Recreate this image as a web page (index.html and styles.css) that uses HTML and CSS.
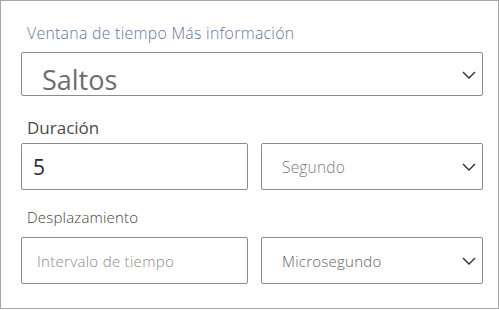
FILE: index.html
```
<!DOCTYPE html>
<html lang="es">
<head>
    <meta charset="UTF-8">
    <meta name="viewport" content="width=device-width, initial-scale=1.0">
    <title>Ventana de tiempo</title>
    <link rel="stylesheet" href="styles.css">
</head>
<body>
    <div class="panel">
        <div class="top-label">Ventana de tiempo Más información</div>
        <div class="select big">
            <span>Saltos</span>
            <svg class="chev" width="14" height="8" viewBox="0 0 14 8"><polyline points="1,1 7,7 13,1" fill="none" stroke="#1f2a3a" stroke-width="1.3"/></svg>
        </div>

        <div class="field-label strong">Duración</div>
        <div class="row">
            <div class="input value">5</div>
            <div class="select">
                <span>Segundo</span>
                <svg class="chev" width="14" height="8" viewBox="0 0 14 8"><polyline points="1,1 7,7 13,1" fill="none" stroke="#1f2a3a" stroke-width="1.3"/></svg>
            </div>
        </div>

        <div class="field-label small">Desplazamiento</div>
        <div class="row">
            <div class="input placeholder">Intervalo de tiempo</div>
            <div class="select dark">
                <span>Microsegundo</span>
                <svg class="chev" width="14" height="8" viewBox="0 0 14 8"><polyline points="1,1 7,7 13,1" fill="none" stroke="#1f2a3a" stroke-width="1.3"/></svg>
            </div>
        </div>
    </div>
</body>
</html>
```
FILE: styles.css
```
body {
    margin: 0;
    background: #ffffff;
    font-family: "Open Sans", "Noto Sans", sans-serif;
}
.panel {
    border: 1px solid #a6a6a6;
    padding: 22px 0 0 20px;
    width: 477px;
    height: 285px;
}
.top-label {
    font-size: 15.8px;
    line-height: 20px;
    font-weight: 300;
    letter-spacing: 0.3px;
    color: #66759a;
    padding-left: 6px;
    margin-bottom: 9px;
}
.select {
    display: flex;
    align-items: center;
    justify-content: space-between;
    border: 1px solid #8c8c8c;
    border-radius: 2px;
    box-sizing: border-box;
    padding: 0 6px 0 20px;
    font-size: 15.5px;
    font-weight: 300;
    letter-spacing: 0.2px;
    color: #7a7a7a;
}
.select.big {
    width: 462px;
    height: 44px;
    align-items: flex-start;
    font-size: 27px;
    font-weight: 400;
    letter-spacing: 0;
    color: #6f6a70;
}
.select.big span {
    line-height: 24px;
    padding-top: 15px;
}
.select.big .chev {
    margin-top: 18px;
}
.select.dark {
    font-size: 15px;
    letter-spacing: 0.25px;
    color: #666666;
}
.field-label {
    padding-left: 6px;
}
.field-label.strong {
    font-size: 17px;
    line-height: 22px;
    color: #4a4a4a;
    margin-top: 21px;
    margin-bottom: 4px;
}
.field-label.small {
    font-size: 15px;
    line-height: 20px;
    font-weight: 300;
    letter-spacing: 0.2px;
    color: #444444;
    margin-top: 17px;
    margin-bottom: 10px;
}
.row {
    display: grid;
    grid-template-columns: 227px 222px;
    gap: 13px;
    height: 47px;
}
.input {
    display: flex;
    align-items: center;
    border: 1px solid #8c8c8c;
    border-radius: 2px;
    box-sizing: border-box;
    padding-left: 11px;
}
.input.value {
    font-size: 21px;
    color: #2b2b2b;
}
.input.placeholder {
    font-size: 15px;
    font-weight: 300;
    letter-spacing: 0.3px;
    color: #8a8a8a;
    padding-left: 15px;
}
.chev {
    flex-shrink: 0;
}
```
